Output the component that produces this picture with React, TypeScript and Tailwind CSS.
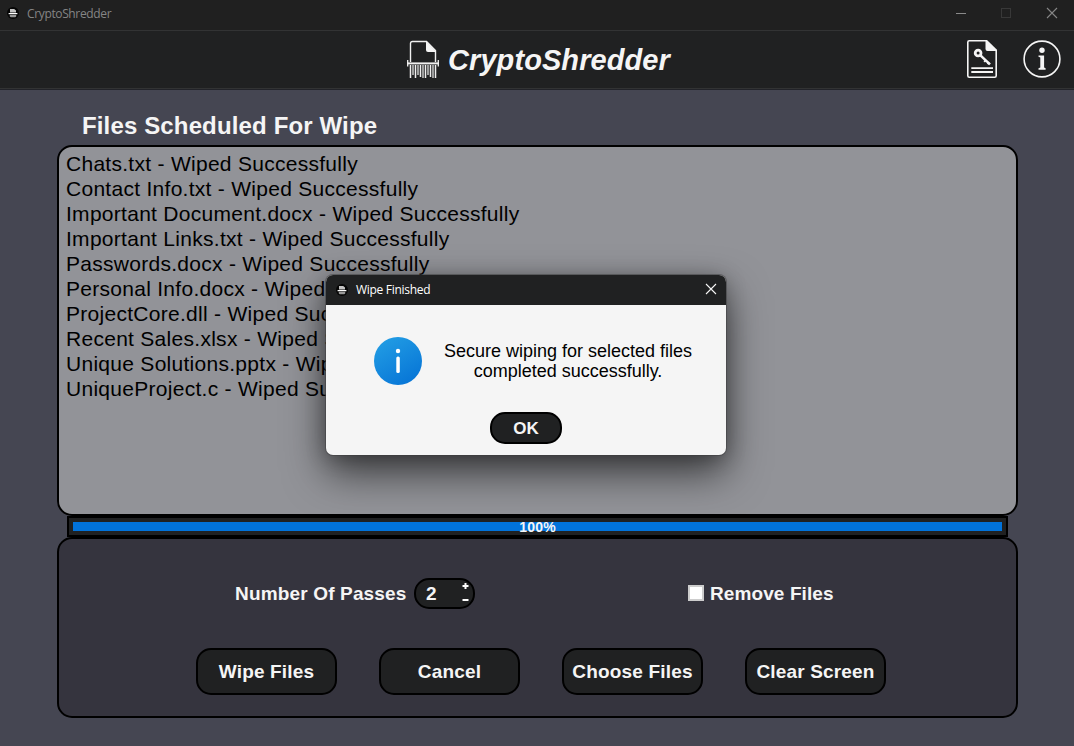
import type { ReactNode } from "react";

const files = [
  "Chats.txt",
  "Contact Info.txt",
  "Important Document.docx",
  "Important Links.txt",
  "Passwords.docx",
  "Personal Info.docx",
  "ProjectCore.dll",
  "Recent Sales.xlsx",
  "Unique Solutions.pptx",
  "UniqueProject.c",
];

function AppIcon() {
  return (
    <svg className="size-3 shrink-0" viewBox="0 0 12 12">
      <circle cx="6" cy="6" r="6" fill="#050505" />
      <path d="M3 1.9h4.2l1.8 1.6v2H3z" fill="#c4c4c4" />
      <path d="M1.6 6h8.8v1.2H1.6z" fill="#fff" />
      <path d="M2.8 7.8h6.4v1.6l-1 .8H3.8l-1-.8z" fill="#9a9a9a" />
    </svg>
  );
}

function ShredderLogo() {
  return (
    <svg className="h-[40px] w-[34px] shrink-0" viewBox="0 0 34 40" fill="none" stroke="#f0f0f0">
      <path d="M4.5 22V3.6Q4.5 1.5 6.5 1.5H20.5L29.5 10.6V22" strokeWidth="1.4" />
      <path d="M20 1.2L30 11.4V12H22Q20 12 20 10z" fill="#f5f5f5" stroke="none" />
      <path d="M1.7 20V26.5M32.3 20V26.5" strokeWidth="1.3" />
      <path d="M1 23.4H33" strokeWidth="2" />
      <path d="M4.5 25V38M9.5 25V38M14.5 25V37M19.5 25V38M24.5 25V37M29.5 25V38" strokeWidth="1.5" />
      <path d="M7 25V35M12 25V35M17 25V38M22 25V35M27 25V38" strokeWidth="1.2" />
    </svg>
  );
}

function LicenseIcon() {
  return (
    <svg className="h-[40px] w-[32px]" viewBox="0 0 32 40" fill="none" stroke="#f5f5f5">
      <path d="M20 1.8H3.3Q1.8 1.8 1.8 3.3V36.7Q1.8 38.2 3.3 38.2H28.7Q30.2 38.2 30.2 36.7V11" strokeWidth="1.6" />
      <path d="M19.5 1H21L31 10.7V12H21.5Q19.5 12 19.5 10z" fill="#f5f5f5" stroke="none" />
      <circle cx="12.1" cy="14" r="2.9" strokeWidth="2.8" />
      <path d="M14.2 16.1L24 25.3" strokeWidth="2.5" />
      <path d="M20 20.9L18.2 22.9M23.2 23.3L21.6 25.2" strokeWidth="2" />
      <path d="M5.3 29.1H27M5.3 33H27" strokeWidth="1.8" />
    </svg>
  );
}

function InfoIcon() {
  return (
    <svg className="size-[38px]" viewBox="0 0 38 38">
      <circle cx="19" cy="19" r="17.9" fill="none" stroke="#f5f5f5" strokeWidth="1.6" />
      <circle cx="19" cy="10.3" r="2.7" fill="#f5f5f5" />
      <path d="M15.5 15.4H21.1V27.6L22.6 28.2V29.7H15.5V28.2L17.3 27.6V17.4L15.5 16.7z" fill="#f5f5f5" />
    </svg>
  );
}

function ActionButton({ children }: { children: ReactNode }) {
  return (
    <button className="flex h-[47px] w-[141px] items-center justify-center rounded-[15px] border-2 border-black bg-[#202122] text-[19px] leading-none font-bold tracking-[0.17px] whitespace-nowrap">
      {children}
    </button>
  );
}

function Dialog() {
  return (
    <div className="absolute top-[275px] left-[326px] flex h-[180px] w-[400px] flex-col overflow-hidden rounded-[7px] bg-[#f5f5f5] shadow-[0_0_0_1px_rgba(60,60,62,0.5),0_2px_20px_rgba(0,0,0,0.25),0_18px_40px_rgba(0,0,0,0.6)]">
      <div className="flex h-[30px] items-center bg-[#202122] pr-[9px] pl-[10px]">
        <AppIcon />
        <span className="ml-2 flex-1 font-['Open_Sans','Noto_Sans',sans-serif] text-[12px] leading-none tracking-[-0.3px] text-white">
          Wipe Finished
        </span>
        <svg className="mb-[2px] size-3" viewBox="0 0 12 12" stroke="#f5f5f5" strokeWidth="1.1">
          <path d="M1 1L11 11M11 1L1 11" />
        </svg>
      </div>
      <div className="flex pt-8 pl-12">
        <svg className="size-12 shrink-0" viewBox="0 0 48 48">
          <defs>
            <linearGradient id="info" x1="0.2" y1="0" x2="0.8" y2="1">
              <stop offset="0" stopColor="#229de4" />
              <stop offset="1" stopColor="#0674d6" />
            </linearGradient>
          </defs>
          <circle cx="24" cy="24" r="24" fill="url(#info)" />
          <circle cx="24" cy="14" r="2.2" fill="#fff" />
          <rect x="22.3" y="19.5" width="3.5" height="16.5" rx="1.6" fill="#fff" />
        </svg>
        <p className="mt-1 ml-[12px] w-[268px] text-center text-[18px] leading-[20px] text-black">
          Secure wiping for selected files
          <br />
          completed successfully.
        </p>
      </div>
      <button className="mt-[27px] flex h-8 w-[72px] items-center justify-center self-center rounded-[15px] border-2 border-black bg-[#202122] text-[17px] leading-none font-bold">
        OK
      </button>
    </div>
  );
}

export default function App() {
  return (
    <div className="relative flex h-[746px] w-[1074px] flex-col overflow-hidden bg-[#454652] font-['Liberation_Sans',Arial,sans-serif] text-[#f5f5f5]">
      <div className="flex h-[30px] shrink-0 items-start bg-[#202020] pt-[7px] pl-[7px]">
        <AppIcon />
        <span className="ml-2 flex-1 font-['Open_Sans','Noto_Sans',sans-serif] text-[12px] leading-[14px] tracking-[-0.36px] text-[#858585]">
          CryptoShredder
        </span>
        <svg className="h-[14px] w-[118px]" viewBox="0 0 118 14" fill="none">
          <path d="M0 6.5H10" stroke="#8a8a8a" />
          <rect x="45.5" y="1.5" width="9" height="9" stroke="#383838" />
          <path d="M91 1L101 11M101 1L91 11" stroke="#868686" strokeWidth="1.1" />
        </svg>
      </div>
      <header className="flex h-[59px] shrink-0 items-center border-t border-b border-[#323334] bg-[#202122] pr-[13px]">
        <div className="ml-[406px] flex flex-1 items-center">
          <ShredderLogo />
          <h1 className="mt-[2px] ml-2 text-[29px] leading-none font-bold tracking-[0.08px] italic">
            CryptoShredder
          </h1>
        </div>
        <div className="mb-[2px] flex items-center gap-[25px]">
          <LicenseIcon />
          <InfoIcon />
        </div>
      </header>

      <main className="flex flex-col border-t border-[#222329] pr-[56px] pl-[57px]">
        <h2 className="mt-[22px] ml-[25px] h-[33px] text-[24px] leading-[28px] font-bold tracking-[0.14px]">
          Files Scheduled For Wipe
        </h2>
        <ul className="h-[371px] rounded-[15px] border-2 border-black bg-[#929398] pt-[4px] pl-[7px] text-[21px] leading-[25px] tracking-[0.28px] text-black">
          {files.map((f) => (
            <li key={f}>{f} - Wiped Successfully</li>
          ))}
        </ul>
        <div className="mr-[10px] ml-[10px] flex h-[21px] flex-col border-2 border-black bg-[#202122] p-1">
          <div className="flex h-[9px] items-center justify-center bg-[#0173db] text-[14px] leading-none font-bold tracking-[0.2px]">
            100%
          </div>
        </div>
        <section className="flex h-[181px] flex-col rounded-[15px] border-2 border-black bg-[#35343e]">
          <div className="mt-[39px] flex h-[31px] items-center pl-[176px] text-[19px] leading-none font-bold">
            <span className="w-[179px] tracking-[0.16px]">Number Of Passes</span>
            <div className="flex h-[31px] w-[61px] items-center justify-between rounded-[15px] border-2 border-black bg-[#202122] pr-[4px] pl-[10px]">
              <span className="text-[19px]">2</span>
              <svg className="h-[23px] w-[7px]" viewBox="0 0 7 23" stroke="#fff" strokeWidth="2">
                <path d="M0.5 4H6.5M3.5 1V7M0.5 18H6.5" />
              </svg>
            </div>
            <span className="mb-px ml-[213px] size-4 border-2 border-[#cdcdcd] bg-white" />
            <span className="ml-[6px] tracking-[0.1px]">Remove Files</span>
          </div>
          <div className="mt-[39px] flex gap-[42px] pl-[137px]">
            <ActionButton>Wipe Files</ActionButton>
            <ActionButton>Cancel</ActionButton>
            <ActionButton>Choose Files</ActionButton>
            <ActionButton>Clear Screen</ActionButton>
          </div>
        </section>
      </main>

      <Dialog />
    </div>
  );
}
